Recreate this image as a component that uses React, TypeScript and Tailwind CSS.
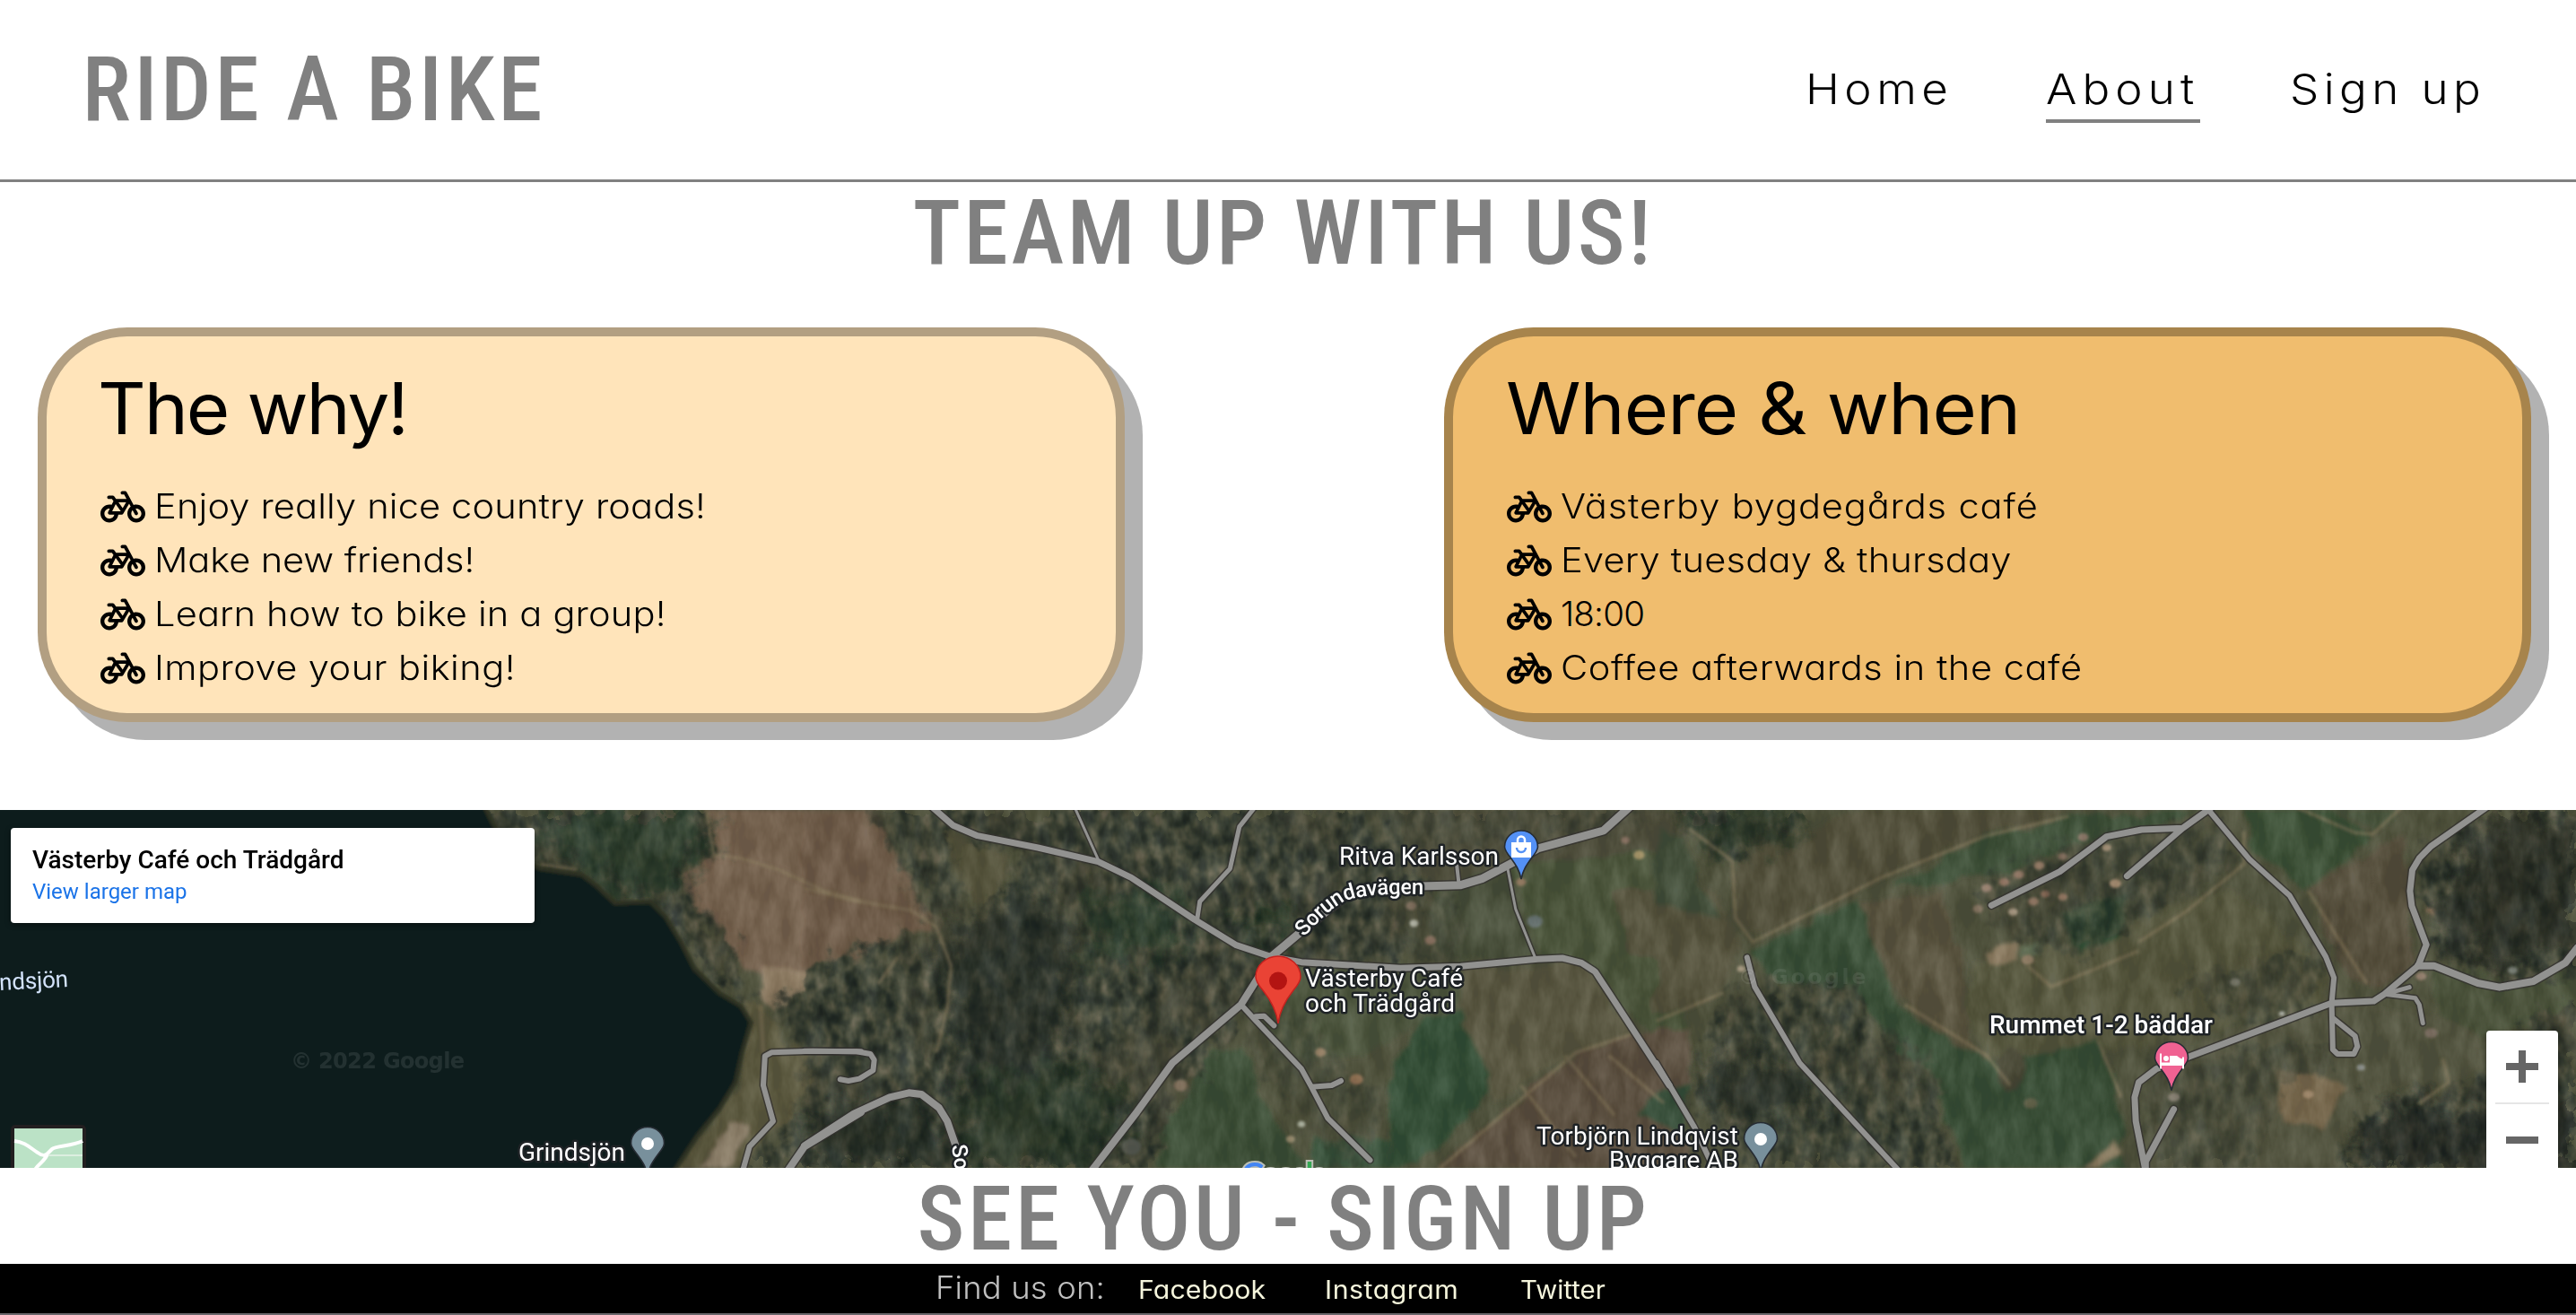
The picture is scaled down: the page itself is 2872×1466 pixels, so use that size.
import { FaBicycle } from "react-icons/fa6";

const LEFT = "matrix(.6122 0 0 .3333 0 -13)";
const MID = "matrix(.6122 0 0 .3333 900 -13)";
const RIGHT = "matrix(.6518 0 0 .3333 1850 -13)";

type Area = [string, string];
type Road = [string, number];

const leftFields: Area[] = [
  ["1285,20 1568,20 1568,545 1500,555 1470,600 1400,600 1350,560 1310,440 1265,370 1240,250 1290,200", "#77624f"],
  ["1390,560 1480,570 1470,640 1420,700 1390,660", "#8f7c64"],
  ["1350,680 1400,690 1420,830 1568,880 1568,930 1460,1000 1420,1100 1340,1250 1220,1250 1300,1080 1345,950", "#5d5a41"],
  ["1330,1080 1365,1100 1330,1236 1270,1236", "#8d7f6b"],
];

const midFields: Area[] = [
  ["-5,20 120,20 150,150 190,260 200,340 240,400 235,440 170,470 110,520 40,545 -5,570", "#705c4a"],
  ["245,110 375,180 350,300 330,370 295,360 270,240", "#57543d"],
  ["210,780 250,780 265,880 235,950 212,930", "#8b7454"],
  ["1060,560 1200,560 1190,690 1000,870 870,860 800,700 880,560", "#4c553c"],
  ["1080,20 1600,20 1600,200 1290,230 1150,290 1090,240", "#4f4f3d"],
  ["1140,300 1270,230 1330,530 1180,555 1130,480", "#46503a"],
  ["1280,230 1600,160 1600,900 1440,600 1330,530", "#49553b"],
  ["1460,300 1600,300 1600,560 1500,520", "#55523d"],
  ["1190,570 1410,550 1510,790 1400,850 1250,1020 1185,720", "#595640"],
  ["1120,740 1190,700 1245,960 1150,1180 1060,1240 1070,900", "#304f37"],
  ["735,850 795,830 830,1000 910,1240 640,1240 650,1080", "#3a4f38"],
  ["920,1130 1060,1140 1060,1240 920,1240", "#35513a"],
  ["1600,760 1490,790 1400,850 1140,1250 1600,1250", "#5c5041"],
  ["1540,1000 1600,960 1600,1120 1510,1060", "#35503a"],
];

const rightFields: Area[] = [
  ["-5,100 60,230 140,470 110,650 -5,740", "#55523e"],
  ["130,180 380,20 740,20 560,120 390,260 160,470 130,400", "#514f3b"],
  ["-5,100 40,130 100,400 -5,360", "#42503a"],
  ["700,60 930,40 760,130 600,250 400,290 560,130", "#3a4f38"],
  ["1000,30 1140,30 1210,130 1190,190 1100,300 1010,150", "#3b5139"],
  ["1140,30 1270,30 1215,115", "#46543c"],
  ["1110,300 1280,110 1290,540 1230,650 1160,560", "#564f3e"],
  ["330,360 480,310 520,560 540,860 440,730 390,580", "#5a5541"],
  ["540,560 980,300 1140,560 1140,680 880,820 560,870 520,700", "#55563e"],
  ["685,380 800,320 790,470 720,520", "#2c4b32"],
  ["335,350 375,510 410,680 440,740 550,860 590,900 620,870 750,805 780,960 800,1250 520,1250 480,1000 400,850 330,650 200,610 150,510", "#395039"],
  ["575,900 600,830 625,880 620,960 600,990 580,950", "#4a4938"],
  ["920,820 1140,700 1360,720 1420,900 1300,1010 1200,1250 830,1250", "#525440"],
  ["1060,900 1180,960 1130,1110 1060,1080", "#7a6a50"],
  ["1320,570 1600,580 1600,720 1400,800 1330,720", "#4a523b"],
  ["780,1150 800,1180 750,1240 720,1240", "#8a7c60"],
  ["1320,310 1340,330 1335,380 1315,370", "#99785c"],
  ["555,520 605,485 610,535 565,555", "#8b7a60"],
  ["610,490 650,475 650,520 615,530", "#66735a"],
  ["270,850 300,845 290,870 255,890", "#9c8765"],
];

const leftWoods: Area[] = [
  ["880,20 1285,20 1300,190 1240,250 1270,370 1330,480 1350,580 1360,680 1240,480 1190,340 1110,340 1060,250 930,210", "#fff"],
  ["1490,570 1568,540 1568,840 1440,830 1410,700", "#ccc"],
  ["1568,950 1568,1250 1360,1250 1400,1150", "#ddd"],
];

const midWoods: Area[] = [
  ["120,20 1085,20 1100,250 1140,320 1130,480 1060,560 880,560 810,690 740,850 650,1080 640,1250 -5,1250 -5,570 100,520 240,440 300,400 375,300 385,190 250,100 150,150 120,60", "#fff"],
  ["120,20 250,100 270,260 290,380 240,440 200,340 150,150", "#ccc"],
  ["940,20 1560,20 1500,90 1300,150 1100,160", "#777"],
  ["800,700 900,700 960,900 1060,1000 1000,1250 900,1100 820,900", "#666"],
  ["1070,320 1180,320 1190,560 1100,540", "#777"],
];

const rightWoods: Area[] = [
  ["20,20 240,20 235,120 130,200 90,190", "#eee"],
  ["120,640 330,620 370,760 470,900 500,1250 250,1250 160,1240 60,1000", "#ddd"],
  ["540,290 700,150 960,90 1000,200 900,330 780,470 700,540 560,420", "#999"],
  ["880,620 1140,480 1120,700 1000,760", "#999"],
  ["1420,20 1600,20 1600,560 1450,620 1320,520 1330,430 1300,330 1300,200", "#fff"],
  ["1568,680 1600,680 1600,1250 1170,1250 1200,1080 1270,980 1330,1010 1420,900 1500,740", "#fff"],
  ["840,900 930,850 1080,820 1180,850 1060,980 1010,1250 850,1250 830,1000", "#777"],
];

const shade: [string, string, string][] = [
  [LEFT, "1000,30 1280,30 1290,190 1180,330 1100,300 1070,240 990,160", "#1f3826"],
  [MID, "500,330 690,330 680,500 520,540", "#203c29"],
  [MID, "780,400 860,380 880,440 820,490", "#17301f"],
  [MID, "240,480 400,300 500,500 450,900 380,1200 280,1100 260,700", "#1e2723"],
  [MID, "20,1030 180,1010 250,1060 260,1240 -5,1240", "#18241d"],
  [MID, "280,950 500,900 600,1000 520,1240 290,1240", "#1d3324"],
  [RIGHT, "20,30 240,30 230,120 100,190", "#1a3323"],
  [RIGHT, "80,880 230,860 290,1000 180,1100 80,1020", "#1e2822"],
  [RIGHT, "1430,60 1600,90 1600,500 1440,540 1320,480 1350,300", "#1a221d"],
  [RIGHT, "1240,1000 1400,1040 1600,1000 1600,1250 1180,1250", "#141c1a"],
];

const leftRoads: Road[] = [
  ["M1568 847L1480 845L1405 850L1393 862L1390 960L1408 1080L1365 1165L1352 1250", 6],
  ["M1568 1050L1465 1165L1433 1250", 8],
];

const midRoads: Road[] = [
  ["M487 30L530 205", 3],
  ["M1275 230L1290 370L1325 530", 3],
  ["M1183 225L1187 290", 4],
  ["M815 30L787 95L770 235L715 345L710 405", 5],
  ["M228 30L265 90L310 125L420 165L530 212L590 265L705 405L780 490L845 530", 7],
  ["M845 530L900 445L985 320L1060 297L1190 290L1230 268L1290 210L1330 168L1450 108L1497 30", 9],
  ["M845 530L900 548L1080 568L1190 562L1330 538L1375 534L1410 550L1435 580L1460 650L1570 960", 7],
  ["M845 530L790 690L665 885L600 1050L516 1250", 8],
  ["M790 690L815 740L900 905L918 965L948 1070L1025 1210M918 965L955 960L972 945M817 730L832 728L850 760", 6],
  ["M-5 845L90 847L115 855L122 875L120 910L95 938L75 945L60 940", 6],
  ["M-5 1162L85 1055L150 1000L185 985L208 990L240 1035L255 1080L270 1160", 8],
];

const rightRoads: Road[] = [
  ["M945 30L895 100L825 105L765 128L740 165L685 245L568 358M895 100L800 260", 7],
  ["M942 45L1010 205L1078 325L1140 530L1154 600L1150 685L1152 840L1160 855L1188 855L1194 830L1190 795L1152 735", 6],
  ["M1150 685L1222 678L1240 655L1298 560L1312 490L1287 360L1284 310L1288 240L1300 200L1320 160L1415 30", 7],
  ["M1298 560L1325 560L1400 618L1437 632L1495 612L1550 550L1570 500", 8],
  ["M1240 655L1293 668L1300 690L1306 752M1240 655L1283 632", 5],
  ["M1150 685L905 865L850 905L820 950L813 1000L815 1080L832 1250L832 1215L880 1040", 7],
  ["M150 532L163 630L240 885L412 1250", 6],
  ["M-5 885L60 1100L96 1250", 6],
];

const tracks: [string, string][] = [
  [LEFT, "M1285 30L1300 190L1350 200L1420 240L1500 310L1570 345M985 222L1050 240M1385 690L1390 850"],
  [MID, "M-5 300L80 340L190 375L235 430L262 560L255 700L235 850M165 530L130 620M1500 790L1400 850L1150 1240M1380 860L1470 1060M1300 960L1400 1200M1460 860L1560 1020"],
  [RIGHT, "M700 60L560 125L380 265L160 480L130 400L125 210L50 100M1000 110L1000 220L900 380L820 480M820 510L740 575L670 630L630 560M1110 310L1210 620M420 690L560 860L600 960M1090 30L1190 115L1220 120L1270 30M750 810L790 1000M1340 870L1350 950L1300 1020M110 650L-5 745"],
];

const specks: [string, number, number, number, string][] = [
  [MID, 1105, 418, 8, "#c9cbc0"], [MID, 1135, 475, 10, "#96796a"], [MID, 1100, 360, 10, "#8c7868"],
  [MID, 1515, 190, 10, "#b09a6a"], [MID, 1490, 140, 8, "#8f7466"], [MID, 1325, 412, 14, "#6e7b80"],
  [MID, 935, 850, 10, "#a08468"], [MID, 1000, 940, 12, "#a37c5e"], [MID, 900, 1090, 7, "#c5ccbc"],
  [MID, 880, 1140, 8, "#a99a7c"], [MID, 680, 960, 13, "#8a7562"], [MID, 590, 1165, 18, "#5e6259"],
  [MID, 1060, 200, 7, "#a08e80"], [MID, 1300, 280, 9, "#9a7a60"], [RIGHT, 560, 300, 9, "#a38777"],
  [RIGHT, 590, 280, 9, "#94725f"], [RIGHT, 615, 255, 9, "#9c7d6b"], [RIGHT, 650, 225, 9, "#a98975"],
  [RIGHT, 690, 195, 8, "#8f7566"], [RIGHT, 725, 130, 9, "#93776a"], [RIGHT, 765, 165, 8, "#b29a80"],
  [RIGHT, 605, 380, 8, "#c0ad96"], [RIGHT, 640, 345, 9, "#a0806d"], [RIGHT, 660, 320, 8, "#93705e"],
  [RIGHT, 690, 330, 8, "#9f7d69"], [RIGHT, 545, 370, 9, "#8d7866"], [RIGHT, 780, 285, 10, "#b8997d"],
  [RIGHT, 630, 540, 11, "#a08871"], [RIGHT, 1303, 595, 9, "#a3897a"], [RIGHT, 1460, 575, 8, "#8a9188"],
  [RIGHT, 1320, 785, 11, "#87776c"], [RIGHT, 1200, 900, 7, "#9aa0a0"], [RIGHT, 1110, 990, 9, "#b59a7c"],
  [RIGHT, 1065, 720, 5, "#d0d4ce"], [RIGHT, 985, 615, 9, "#7d7d70"], [RIGHT, 140, 570, 7, "#b5a58c"],
  [RIGHT, 880, 1000, 10, "#8b8377"], [RIGHT, 635, 1020, 12, "#6a6650"],
];

function Areas({ t, list }: { t: string; list: Area[] }) {
  return (
    <g transform={t}>
      {list.map(([p, c], i) => (
        <polygon key={i} points={p} fill={c} />
      ))}
    </g>
  );
}

function Roads({ t, list, casing }: { t: string; list: Road[]; casing?: boolean }) {
  return (
    <g transform={t} fill="none" stroke={casing ? "#33312f" : "#929290"} strokeLinecap="round" strokeLinejoin="round">
      {list.map(([d, w], i) => (
        <path key={i} d={d} strokeWidth={casing ? w + 3 : w} vectorEffect="non-scaling-stroke" opacity={casing ? 0.8 : 1} />
      ))}
    </g>
  );
}

function Pin({ x, y, color, children }: { x: number; y: number; color: string; children?: React.ReactNode }) {
  return (
    <g transform={`translate(${x} ${y})`}>
      <path d="M0 54C-2 44-6 38-12 30-16 25-18.500 21-18.500 18A18.500 18 0 0 1 18.500 18C18.500 21 16 25 12 30 6 38 2 44 0 54Z" fill={color} stroke="#262c33" strokeWidth="1.600" />
      {children}
    </g>
  );
}

const halo = { fontFamily: "Roboto, sans-serif", fontSize: 28, fill: "#fff", stroke: "#1f2326", strokeWidth: 5, strokeLinejoin: "round" as const, paintOrder: "stroke" };

function MapCanvas() {
  return (
    <svg width="2872" height="399" viewBox="0 0 2872 399" className="block">
      <defs>
        <filter id="woods" x="0" y="0" width="100%" height="100%" colorInterpolationFilters="sRGB">
          <feTurbulence type="fractalNoise" baseFrequency="0.075 0.05" numOctaves="4" seed="7" />
          <feColorMatrix values="1.700 0 0 0 -0.380  1.700 0 0 0 -0.380  1.700 0 0 0 -0.380  0 0 0 0 1" />
          <feComponentTransfer>
            <feFuncR type="table" tableValues=".12 .165 .235 .32 .42" />
            <feFuncG type="table" tableValues=".15 .20 .262 .33 .40" />
            <feFuncB type="table" tableValues=".135 .17 .210 .26 .33" />
          </feComponentTransfer>
          <feGaussianBlur stdDeviation="0.800" />
        </filter>
        <filter id="patchy" x="0" y="0" width="100%" height="100%" colorInterpolationFilters="sRGB">
          <feTurbulence type="fractalNoise" baseFrequency="0.012 0.012" numOctaves="3" seed="3" />
          <feColorMatrix values="0 0 0 0 .30  0 0 0 0 .29  0 0 0 0 .22  4 0 0 0 -1.900" />
        </filter>
        <filter id="grain" x="0" y="0" width="100%" height="100%" colorInterpolationFilters="sRGB">
          <feTurbulence type="fractalNoise" baseFrequency="0.05 0.02" numOctaves="4" seed="21" />
          <feColorMatrix values="2 0 0 0 -0.620  2 0 0 0 -0.640  2 0 0 0 -0.720  0 0 0 0 .11" />
        </filter>
        <filter id="ragged" x="0" y="0" width="2872" height="399" filterUnits="userSpaceOnUse">
          <feTurbulence type="fractalNoise" baseFrequency="0.03" numOctaves="3" seed="5" result="n" />
          <feDisplacementMap in="SourceGraphic" in2="n" scale="20" xChannelSelector="R" yChannelSelector="G" />
          <feGaussianBlur stdDeviation="2" />
        </filter>
        <filter id="feather" x="0" y="0" width="2872" height="399" filterUnits="userSpaceOnUse">
          <feTurbulence type="fractalNoise" baseFrequency="0.05" numOctaves="3" seed="9" result="n" />
          <feGaussianBlur in="SourceGraphic" stdDeviation="5" result="b" />
          <feDisplacementMap in="b" in2="n" scale="46" xChannelSelector="R" yChannelSelector="G" />
        </filter>
        <filter id="shadeBlur" x="0" y="0" width="2872" height="399" filterUnits="userSpaceOnUse">
          <feTurbulence type="fractalNoise" baseFrequency="0.04" numOctaves="4" seed="15" result="n" />
          <feGaussianBlur in="SourceGraphic" stdDeviation="9" result="b" />
          <feDisplacementMap in="b" in2="n" scale="70" xChannelSelector="R" yChannelSelector="G" />
        </filter>
        <filter id="soft" x="0" y="0" width="2872" height="399" filterUnits="userSpaceOnUse">
          <feGaussianBlur stdDeviation="1.800" />
        </filter>
        <mask id="woodsArea" maskUnits="userSpaceOnUse" x="0" y="0" width="2872" height="399">
          <g filter="url(#feather)">
            <Areas t={LEFT} list={leftWoods} />
            <Areas t={MID} list={midWoods} />
            <Areas t={RIGHT} list={rightWoods} />
          </g>
        </mask>
        <path id="sorundaPath" d="M1454 142Q1476 116 1495 104T1589 94" />
      </defs>

      <rect width="2872" height="399" fill="#4f523d" />
      <g filter="url(#ragged)">
        <Areas t={LEFT} list={leftFields} />
        <Areas t={MID} list={midFields} />
        <Areas t={RIGHT} list={rightFields} />
      </g>
      <g mask="url(#woodsArea)">
        <rect width="2872" height="399" filter="url(#woods)" />
        <rect width="2872" height="399" filter="url(#patchy)" opacity="0.450" />
      </g>
      <g filter="url(#shadeBlur)" opacity="0.550">
        {shade.map(([t, p, c], i) => (
          <polygon key={i} transform={t} points={p} fill={c} />
        ))}
      </g>
      <g filter="url(#soft)">
        {specks.map(([t, x, y, r, c], i) => (
          <g key={i} transform={t}>
            <ellipse cx={x} cy={y} rx={r} ry={r * 1.5} fill={c} opacity="0.850" />
          </g>
        ))}
        {tracks.map(([t, d], i) => (
          <g key={i} transform={t}>
            <path d={d} fill="none" stroke="#8a7d60" strokeWidth="4" opacity="0.550" vectorEffect="non-scaling-stroke" />
          </g>
        ))}
      </g>
      <rect width="2872" height="399" filter="url(#grain)" />
      <g filter="url(#soft)">
        <path transform={LEFT} d="M-20 0L875 0L900 90L930 195L985 235L1060 255L1085 290L1120 350L1185 345L1212 395L1240 480L1265 570L1310 650L1350 695L1368 750L1352 850L1340 950L1310 1040L1270 1130L1220 1270L-20 1270Z" fill="#101c1b" stroke="#2e3222" strokeWidth="5" vectorEffect="non-scaling-stroke" />
      </g>

      <Roads t={LEFT} list={leftRoads} casing />
      <Roads t={MID} list={midRoads} casing />
      <Roads t={RIGHT} list={rightRoads} casing />
      <Roads t={LEFT} list={leftRoads} />
      <Roads t={MID} list={midRoads} />
      <Roads t={RIGHT} list={rightRoads} />

      <text x="324" y="288" textLength="194" fontFamily="DejaVu Sans, sans-serif" fontWeight="700" fontSize="24" fill="#fff" opacity="0.090">© 2022 Google</text>
      <text x="1938" y="194" textLength="142" fontFamily="DejaVu Sans, sans-serif" fontWeight="700" fontSize="23" fill="#fff" opacity="0.070">© Google</text>
      <text x="-1" y="199" textLength="77" transform="rotate(-3 38 190)" fontFamily="Roboto, sans-serif" fontSize="26" fill="#d3e3fb">ndsjön</text>

      <g {...halo}>
        <text x="578" y="391" textLength="119">Grindsjön</text>
        <text x="1493" y="61" textLength="178">Ritva Karlsson</text>
        <text x="1455" y="197" textLength="176">Västerby Café</text>
        <text x="1455" y="225" textLength="167">och Trädgård</text>
        <text x="2218" y="249" textLength="249" fontWeight="500">Rummet 1-2 bäddar</text>
        <text x="1713" y="373" textLength="225">Torbjörn Lindqvist</text>
        <text x="1794" y="400" textLength="144">Byggare AB</text>
        <text fontSize="24" fontWeight="500" letterSpacing="-0.400">
          <textPath href="#sorundaPath">Sorundavägen</textPath>
        </text>
        <text transform="translate(1061 374) rotate(82)" fontSize="24" fontWeight="500">Sorundavägen</text>
      </g>

      <Pin x={722} y={353.5} color="#78909c"><circle cy="18.500" r="7" fill="#fff" /></Pin>
      <Pin x={1963} y={348.5} color="#78909c"><circle cy="18.500" r="7" fill="#fff" /></Pin>
      <Pin x={1696} y={23} color="#5491f5">
        <path d="M-11 13H11V30H-11Z" fill="#fff" />
        <path d="M-4 13V10.500A4 4 0 0 1 4 10.500V13" fill="none" stroke="#fff" strokeWidth="2.500" />
        <path d="M-5 19A5 5 0 0 0 5 19" fill="none" stroke="#5491f5" strokeWidth="2.500" />
      </Pin>
      <Pin x={2421} y={258.5} color="#f06292">
        <path d="M-12 13V30M13 17V30M-12 25.500H13" fill="none" stroke="#fff" strokeWidth="2" />
        <circle cx="-6" cy="18.500" r="3" fill="#fff" />
        <path d="M-12 23H-2V15.500H6Q10 19 13 19V26H-12Z" fill="#fff" />
      </Pin>
      <path d="M1425 238C1423 222 1416 211 1408 201C1402 194 1400 189 1400 186A25 23 0 0 1 1450 186C1450 189 1448 194 1442 201C1434 211 1427 222 1425 238Z" fill="#ea4335" stroke="#c5221f" strokeWidth="1.500" />
      <circle cx="1425" cy="190.500" r="10" fill="#b31412" />

      <text x="1384" y="419" textLength="96" fontFamily="Lato, sans-serif" fontSize="36" fontWeight="700" stroke="#d9dbd6" strokeWidth="4" strokeOpacity="0.800" paintOrder="stroke">
        <tspan fill="#4285f4">G</tspan><tspan fill="#ea4335">o</tspan><tspan fill="#fbbc05">o</tspan><tspan fill="#4285f4">g</tspan><tspan fill="#34a853">l</tspan><tspan fill="#ea4335">e</tspan>
      </text>

      <g>
        <rect x="12" y="351" width="84" height="60" rx="5" fill="#221f20" />
        <path d="M16 355H92V399H16Z" fill="#bbe2c6" />
        <path d="M16 369C28 370 34 377 42 382C47 386 51 385 53 383L58 378C62 374 80 375 92 369M53 383C50 392 44 393 39 401" fill="none" stroke="#fff" strokeWidth="4" />
        <path d="M54 385H92" stroke="#dcefe0" strokeWidth="2" />
      </g>
    </svg>
  );
}

function BikeItem({ text, spacing }: { text: string; spacing: string }) {
  return (
    <li className="flex h-[60px] items-center gap-[10px]">
      <FaBicycle className="h-[40px] w-[50px] shrink-0" />
      <span className={`inline-block origin-left whitespace-nowrap ${spacing}`}>{text}</span>
    </li>
  );
}

const cardClass = "h-[440px] w-[1212px] rounded-[100px] border-[10px] border-black/30 pl-[60px] pt-[30px] shadow-[20px_20px_0_rgba(0,0,0,0.3)]";
const headingClass = "pr-[10px] pt-[7px] text-center font-['Roboto_Condensed',Roboto,sans-serif] text-[100px] font-medium leading-[100px] text-[#808080]";

export default function App() {
  return (
    <div className="h-[1466px] w-[2872px] overflow-hidden bg-white font-[Inter,sans-serif] text-black [font-feature-settings:'cv11']">
      <header className="flex h-[203px] items-center justify-between border-b-[3px] border-[#808080] pl-[91.500px]">
        <h1 className="font-['Roboto_Condensed',Roboto,sans-serif] text-[100px] font-medium leading-[100px] tracking-[3.600px] text-[#808080]">RIDE A BIKE</h1>
        <nav className="mt-[2px] flex whitespace-nowrap text-[46.500px] font-light leading-[68px]">
          <a className="mr-[101px] w-[167px] border-b-4 border-transparent">
            <span className="inline-block origin-left scale-x-110 tracking-[5px]">Home</span>
          </a>
          <a className="mr-[100px] w-[172px] border-b-4 border-[#808080]">
            <span className="inline-block origin-left scale-x-110 tracking-[5.500px]">About</span>
          </a>
          <a className="w-[319px] border-b-4 border-transparent">
            <span className="inline-block origin-left scale-x-110 tracking-[4.900px]">Sign up</span>
          </a>
        </nav>
      </header>

      <main>
        <h2 className={`${headingClass} tracking-[3.600px]`}>TEAM UP WITH US!</h2>
        <div className="mt-[55px] flex justify-between pl-[42px] pr-[50px]">
          <section className={`${cardClass} bg-[#ffe4ba]`}>
            <h3 className="-ml-[3px] w-fit origin-left scale-x-104 text-[80px] leading-[100px] tracking-[-2px]">The why!</h3>
            <ul className="mt-[30px] text-[38.500px] font-light">
              <BikeItem text="Enjoy really nice country roads!" spacing="scale-x-108 tracking-[0.130px]" />
              <BikeItem text="Make new friends!" spacing="scale-x-108 tracking-[-0.100px]" />
              <BikeItem text="Learn how to bike in a group!" spacing="scale-x-108 tracking-[0.150px]" />
              <BikeItem text="Improve your biking!" spacing="scale-x-108 tracking-[0.400px]" />
            </ul>
          </section>
          <section className={`${cardClass} bg-[#f0bd6e]`}>
            <h3 className="-ml-[1px] w-fit origin-left scale-x-106 whitespace-nowrap text-[80px] leading-[100px] tracking-[-0.900px]">Where &amp; when</h3>
            <ul className="mt-[30px] text-[38.500px] font-light">
              <BikeItem text="Västerby bygdegårds café" spacing="scale-x-108 tracking-[0.800px]" />
              <BikeItem text="Every tuesday & thursday" spacing="scale-x-108 tracking-[0.200px]" />
              <BikeItem text="18:00" spacing="tracking-[-0.800px]" />
              <BikeItem text="Coffee afterwards in the café" spacing="scale-x-108 tracking-[0.500px]" />
            </ul>
          </section>
        </div>

        <div className="relative mt-[98px] h-[399px] overflow-hidden">
          <MapCanvas />
          <div className="absolute left-[12px] top-[20px] h-[106px] w-[584px] rounded-[4px] bg-white pl-[24px] pt-[18px] font-[Roboto,sans-serif] shadow-[0_2px_6px_rgba(0,0,0,0.4)]">
            <p className="text-[28px] font-medium leading-[36px]">Västerby Café och Trädgård</p>
            <p className="mt-px text-[24px] leading-[32px] text-[#1a73e8]">View larger map</p>
          </div>
          <div className="absolute right-[20px] top-[246px] flex h-[160px] w-[80px] flex-col items-center rounded-[4px] bg-white shadow-[0_2px_6px_rgba(0,0,0,0.4)]">
            <svg viewBox="0 0 36 36" className="mt-[22px] h-[36px] w-[36px]">
              <path d="M0 14H14V0H22V14H36V22H22V36H14V22H0Z" fill="#666" />
            </svg>
            <div className="mt-[22px] h-[2px] w-[60px] bg-[#e6e6e6]" />
            <div className="mt-[36px] h-[8px] w-[36px] bg-[#666]" />
          </div>
        </div>

        <h2 className={`${headingClass} tracking-[3.600px]`}>SEE YOU - SIGN UP</h2>
      </main>

      <footer className="flex h-[57px] items-baseline whitespace-nowrap border-b-2 border-[#6b676c] bg-black pl-[1043px] leading-[53px] text-[#f5f5dc]">
        <span className="w-[225.500px] text-[35px] font-light text-[#c0c0c0]">
          <span className="inline-block origin-left scale-x-104 tracking-[0.150px]">Find us on:</span>
        </span>
        <a className="w-[208.500px] text-[28px]">
          <span className="inline-block origin-left scale-x-108 tracking-[0.100px]">Facebook</span>
        </a>
        <a className="w-[218px] text-[28px]">
          <span className="inline-block origin-left scale-x-108 tracking-[0.500px]">Instagram</span>
        </a>
        <a className="text-[28px]">
          <span className="inline-block origin-left scale-x-105">Twitter</span>
        </a>
      </footer>
    </div>
  );
}
